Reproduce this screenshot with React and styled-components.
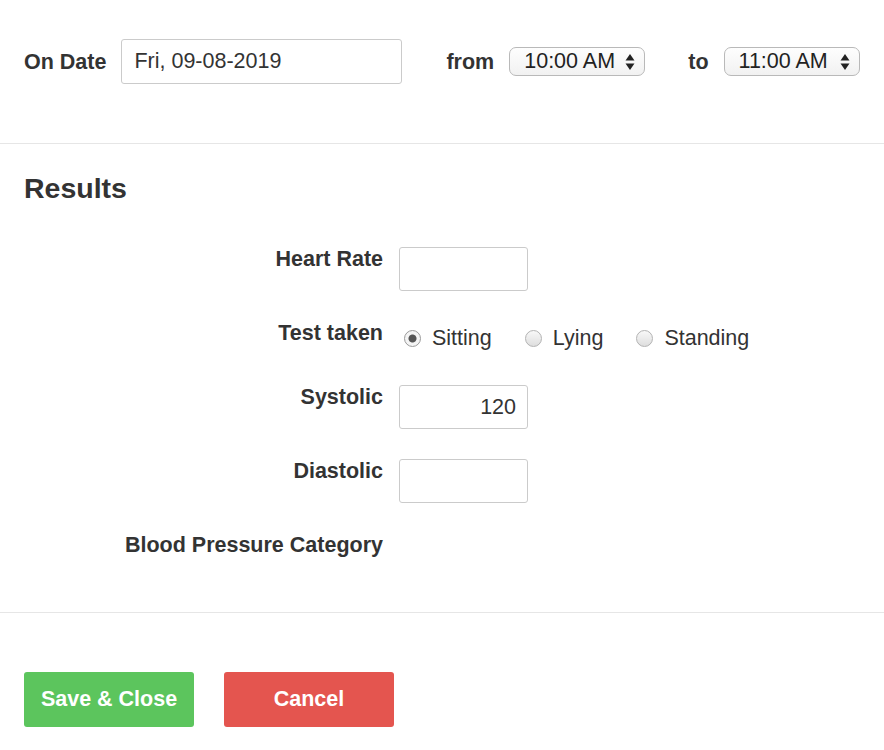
import React from "react";
import styled, { createGlobalStyle } from "styled-components";

const Global = createGlobalStyle`
  html, body { margin: 0; padding: 0; background: #fff; }
  body { font-family: "Liberation Sans", Arial, Helvetica, sans-serif; color: #333; }
  * { box-sizing: border-box; }
`;

const Page = styled.div`
  width: 884px;
  background: #fff;
`;

const TopSection = styled.section`
  display: flex;
  align-items: center;
  padding: 39px 24px 59px;
  border-bottom: 1px solid #e6e6e6;
`;

const InlineLabel = styled.span`
  flex: none;
  white-space: nowrap;
  font-size: 21.5px;
  font-weight: 700;
  line-height: 24px;
  margin-left: ${(p) => p.$gapBefore || 0}px;
  margin-right: ${(p) => p.$gapAfter || 0}px;
`;

const DateInput = styled.div`
  flex: none;
  width: 281px;
  height: 45px;
  border: 1px solid #cbcbcb;
  border-radius: 3px;
  padding: 0 12px;
  display: flex;
  align-items: center;
  font-size: 21.5px;
  color: #333;
`;

const TimeSelect = styled.div`
  flex: none;
  width: 136px;
  height: 29px;
  border: 1px solid #b9b9b9;
  border-radius: 7px;
  background: linear-gradient(#fefefe, #f1f1f1);
  display: flex;
  align-items: center;
  justify-content: space-between;
  padding: 0 9px 0 14px;
  font-size: 21.5px;
  color: #222;
  white-space: nowrap;
`;

const ResultsSection = styled.section`
  padding: 27px 24px 55px;
  border-bottom: 1px solid #e6e6e6;
`;

const Heading = styled.h2`
  margin: 0 0 42px;
  font-size: 28.5px;
  line-height: 34px;
  font-weight: 700;
  color: #333;
`;

const FormGrid = styled.div`
  display: grid;
  grid-template-columns: 359px 1fr;
  column-gap: 16px;
  row-gap: 30px;
  align-items: start;
`;

const FieldLabel = styled.label`
  text-align: right;
  font-size: 21.5px;
  font-weight: 700;
  line-height: 24px;
  color: #333;
`;

const NumberBox = styled.div`
  width: 129px;
  height: 44px;
  border: 1px solid #cbcbcb;
  border-radius: 3px;
  padding: 0 11px;
  display: flex;
  align-items: center;
  justify-content: flex-end;
  font-size: 21.5px;
  color: #333;
`;

const RadioGroup = styled.div`
  display: flex;
  align-items: center;
  height: 34px;
  padding-left: 5px;
`;

const RadioOption = styled.label`
  display: flex;
  align-items: center;
  font-size: 21.5px;
  color: #333;
  margin-right: 33px;
`;

const RadioCircle = styled.span`
  width: 17px;
  height: 17px;
  border-radius: 50%;
  border: 1px solid ${(p) => (p.$checked ? "#9a9a9a" : "#b3b3b3")};
  background: ${(p) =>
    p.$checked
      ? "radial-gradient(circle, #555 0 3.5px, #f4f4f4 4.5px)"
      : "linear-gradient(#f8f8f8, #dedede)"};
  margin-right: 11px;
  flex: none;
`;

const Footer = styled.section`
  display: flex;
  gap: 30px;
  padding: 59px 24px 22px;
`;

const Button = styled.button`
  width: 170px;
  height: 55px;
  border: none;
  border-radius: 3px;
  background: ${(p) => p.$bg};
  color: #fff;
  font-family: "Liberation Sans", Arial, sans-serif;
  font-size: 21.5px;
  font-weight: 700;
  cursor: pointer;
`;

const Arrows = () => (
  <svg width="10" height="18" viewBox="0 0 10 18">
    <path d="M5 1 L9.5 7.5 L0.5 7.5 Z" fill="#222" />
    <path d="M5 17 L9.5 10.5 L0.5 10.5 Z" fill="#222" />
  </svg>
);

export default function App() {
  return (
    <Page>
      <Global />
      <TopSection>
        <InlineLabel $gapAfter={15}>On Date</InlineLabel>
        <DateInput>Fri, 09-08-2019</DateInput>
        <InlineLabel $gapBefore={44} $gapAfter={15}>from</InlineLabel>
        <TimeSelect>
          <span>10:00 AM</span>
          <Arrows />
        </TimeSelect>
        <InlineLabel $gapBefore={43} $gapAfter={15}>to</InlineLabel>
        <TimeSelect>
          <span>11:00 AM</span>
          <Arrows />
        </TimeSelect>
      </TopSection>

      <ResultsSection>
        <Heading>Results</Heading>
        <FormGrid>
          <FieldLabel>Heart Rate</FieldLabel>
          <NumberBox />

          <FieldLabel>Test taken</FieldLabel>
          <RadioGroup>
            <RadioOption>
              <RadioCircle $checked />
              Sitting
            </RadioOption>
            <RadioOption>
              <RadioCircle />
              Lying
            </RadioOption>
            <RadioOption>
              <RadioCircle />
              Standing
            </RadioOption>
          </RadioGroup>

          <FieldLabel>Systolic</FieldLabel>
          <NumberBox>120</NumberBox>

          <FieldLabel>Diastolic</FieldLabel>
          <NumberBox />

          <FieldLabel>Blood Pressure Category</FieldLabel>
          <div />
        </FormGrid>
      </ResultsSection>

      <Footer>
        <Button $bg="#5cc55d">Save &amp; Close</Button>
        <Button $bg="#e4554f">Cancel</Button>
      </Footer>
    </Page>
  );
}
